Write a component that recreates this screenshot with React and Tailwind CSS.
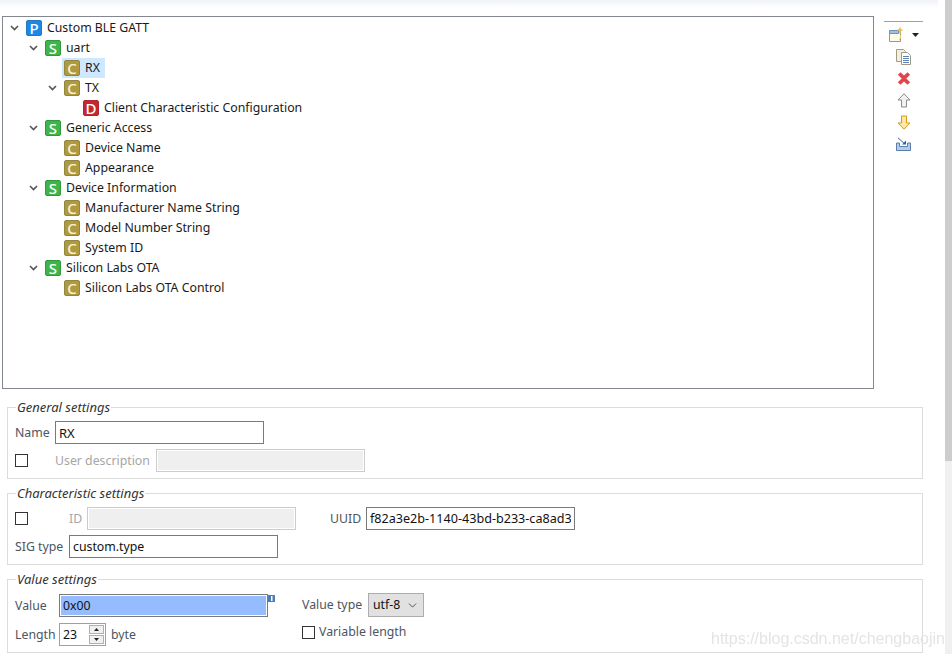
import { ChevronDown } from "lucide-react";

const font = "font-['Noto_Sans','Open_Sans',sans-serif]";

const nodes = [
  { depth: "pl-[5px]", kind: "P", label: "Custom BLE GATT", open: true },
  { depth: "pl-[24px]", kind: "S", label: "uart", open: true },
  { depth: "pl-[43px]", kind: "C", label: "RX", selected: true },
  { depth: "pl-[43px]", kind: "C", label: "TX", open: true },
  { depth: "pl-[62px]", kind: "D", label: "Client Characteristic Configuration" },
  { depth: "pl-[24px]", kind: "S", label: "Generic Access", open: true },
  { depth: "pl-[43px]", kind: "C", label: "Device Name" },
  { depth: "pl-[43px]", kind: "C", label: "Appearance" },
  { depth: "pl-[24px]", kind: "S", label: "Device Information", open: true },
  { depth: "pl-[43px]", kind: "C", label: "Manufacturer Name String" },
  { depth: "pl-[43px]", kind: "C", label: "Model Number String" },
  { depth: "pl-[43px]", kind: "C", label: "System ID" },
  { depth: "pl-[24px]", kind: "S", label: "Silicon Labs OTA", open: true },
  { depth: "pl-[43px]", kind: "C", label: "Silicon Labs OTA Control" },
];

const badgeColors = {
  P: "bg-[#1b87e6] border-[#2a76bd] text-white",
  S: "bg-[#3db54a] border-[#2f9a3c] text-white",
  C: "bg-[#b09a40] border-[#94853f] text-[#f7f3d6]",
  D: "bg-[#c9252d] border-[#ab2a30] text-white",
};

function Badge({ kind }) {
  return (
    <span className={`flex h-4 w-4 items-center justify-center rounded-[2px] border text-[15px] font-medium leading-none ${badgeColors[kind]}`}>
      {kind}
    </span>
  );
}

function TreeRow({ node }) {
  return (
    <div className={`flex h-5 items-center ${node.depth}`}>
      <span className="flex w-[16px] justify-center pr-[3px]">
        {node.open && (
          <svg width="9" height="6" viewBox="0 0 9 6" fill="none" stroke="#555" strokeWidth="1.6">
            <path d="M1 1l3.5 3.5L8 1" />
          </svg>
        )}
      </span>
      <div className={`flex h-5 items-center gap-[5px] pl-[2px] ${node.selected ? "bg-[#cde8ff] pr-[5px]" : "pr-[2px]"}`}>
        <Badge kind={node.kind} />
        <span className="text-[12.3px] leading-5 text-[#1a1a1a]">{node.label}</span>
      </div>
    </div>
  );
}

function Toolbar() {
  return (
    <div className="ml-[10px] flex w-[39px] flex-col">
      <div className="mt-[5px] h-px bg-[#a0a0a0]" />
      {/* new item */}
      <div className="mt-[5px] flex h-[15px] items-center pl-[5px]">
        <svg width="16" height="15" viewBox="0 0 16 15">
          <path d="M.5 3.500h11v11H.5z" fill="#fdfbe8" stroke="#9a9a7a" />
          <path d="M.5 3.500h9v3H.5z" fill="#9cc0e4" stroke="#6f94bc" />
          <path d="M11 .5v6M8.500 3h5" stroke="#e6c04d" strokeWidth="1.6" />
          <path d="M10 13c1.300-1 1.600-3 1.600-5" stroke="#f0d978" fill="none" />
        </svg>
        <svg className="ml-[7px]" width="7" height="4" viewBox="0 0 7 4">
          <path d="M0 0h7L3.500 4z" fill="#222" />
        </svg>
      </div>
      {/* copy */}
      <div className="mt-[7px] flex h-[16px] pl-[12px]">
        <svg width="16" height="16" viewBox="0 0 16 16">
          <path d="M.5.500h7l2 2v10h-9z" fill="#f3efdf" stroke="#a39c7c" />
          <path d="M5.500 3.500h6l3 3v9h-9z" fill="#fff" stroke="#9c9a84" />
          <path d="M7 7.500h6M7 9.500h6M7 11.500h6M7 13.500h6" stroke="#5b80ad" />
        </svg>
      </div>
      {/* delete */}
      <div className="mt-[6px] flex h-[15px] pl-[13px]">
        <svg width="14" height="15" viewBox="0 0 14 15">
          <path d="M2.200 2.500L7 7.200 11.800 2.500M2.200 12.500L7 7.800l4.800 4.700" stroke="#e2444e" strokeWidth="3.800" fill="none" />
        </svg>
      </div>
      {/* move up */}
      <div className="mt-[7px] flex h-[15px] pl-[13px]">
        <svg width="14" height="15" viewBox="0 0 14 15">
          <path d="M7 .8L13 7H9.500v7h-5V7H1z" fill="#f2f2f2" stroke="#8a8a8a" />
        </svg>
      </div>
      {/* move down */}
      <div className="mt-[7px] flex h-[15px] pl-[13px]">
        <svg width="14" height="15" viewBox="0 0 14 15">
          <path d="M7 14.200L13 8H9.500V1h-5v7H1z" fill="#fde9a3" stroke="#d49a1c" />
        </svg>
      </div>
      {/* import */}
      <div className="mt-[7px] flex h-[14px] pl-[11px]">
        <svg width="17" height="14" viewBox="0 0 17 14">
          <path d="M1.500 6v7.500h14V6h-3v3.500h-8V6z" fill="#b8cbe4" stroke="#5a7fae" />
          <path d="M3 .8l6 5.500" stroke="#3a5f95" />
          <path d="M7 7.500h4v-4z" fill="#1f63b0" />
        </svg>
      </div>
    </div>
  );
}

function Group({ title, children, className = "" }) {
  return (
    <fieldset className={`ml-[7px] w-[916px] border border-[#dcdcdc] pl-[7px] ${className}`}>
      <legend className="ml-px h-[15px] px-px text-[13px] italic leading-[15px] text-[#333]">{title}</legend>
      {children}
    </fieldset>
  );
}

function Field({ value, className = "" }) {
  return (
    <input
      readOnly
      value={value}
      className={`h-[23px] border border-[#7a7a7a] bg-white px-[3px] text-[#111] outline-none ${className}`}
    />
  );
}

function DisabledField({ className = "" }) {
  return <div className={`h-[23px] border border-[#cccccc] bg-[#efefef] shadow-[inset_0_0_0_1px_#fff] ${className}`} />;
}

function Check() {
  return <span className="block h-[13px] w-[13px] shrink-0 border border-[#333] bg-white" />;
}

function Label({ children, className = "" }) {
  return <span className={`text-[12.3px] leading-[18px] ${className}`}>{children}</span>;
}

export default function App() {
  return (
    <div className={`flex h-[654px] w-[952px] overflow-hidden bg-white ${font}`}>
      <div className="relative flex w-[945px] flex-col">
        <div className="h-2 w-[938px] bg-gradient-to-b from-[#eff2f8] to-white" />

        <div className="ml-[2px] mt-2 flex">
          <div className="h-[373px] w-[872px] border border-[#828790] py-px">
            {nodes.map((node) => (
              <TreeRow key={node.label} node={node} />
            ))}
          </div>
          <Toolbar />
        </div>

        <Group title="General settings" className="mt-[11px] h-[79px]">
          <div className="flex flex-col gap-[5px] pt-[6px]">
            <div className="flex items-center">
              <Label className="w-10 text-[#4c5560]">Name</Label>
              <Field value="RX" className="w-[209px] text-[13px]" />
            </div>
            <div className="flex items-center">
              <div className="w-10"><Check /></div>
              <Label className="w-[101px] text-[#a6a6a6]">User description</Label>
              <DisabledField className="w-[209px]" />
            </div>
          </div>
        </Group>

        <Group title="Characteristic settings" className="mt-[7px] h-[79px]">
          <div className="flex flex-col gap-[5px] pt-[6px]">
            <div className="flex items-center">
              <div className="w-[54px]"><Check /></div>
              <Label className="w-[18px] text-[#a6a6a6]">ID</Label>
              <DisabledField className="w-[209px]" />
              <Label className="ml-[34px] w-[36px] text-[#4c5560]">UUID</Label>
              <Field value="f82a3e2b-1140-43bd-b233-ca8ad3" className="w-[209px] text-[12.6px]" />
            </div>
            <div className="flex items-center">
              <Label className="w-[54px] text-[#4c5560]">SIG type</Label>
              <Field value="custom.type" className="w-[209px] text-[12.3px]" />
            </div>
          </div>
        </Group>

        <Group title="Value settings" className="mt-[7px] h-[81px]">
          <div className="flex pt-[6px]">
            <div className="mt-px flex w-[287px] flex-col gap-[6px]">
              <div className="flex items-center">
                <Label className="w-11 text-[#4c5560]">Value</Label>
                <div className="relative">
                  <input
                    readOnly
                    value="0x00"
                    className="block h-[23px] w-[209px] border border-[#7a7a7a] bg-[#94bcff] px-[3px] text-[12.3px] text-[#111] shadow-[inset_0_0_0_1px_#fff] outline-none"
                  />
                  <svg className="absolute left-[209px] top-px" width="7" height="7" viewBox="0 0 7 7">
                    <path d="M0 0h7v7H0z" fill="#4a7fb5" />
                    <path d="M3 1h1.500v5H3z" fill="#fff" />
                  </svg>
                </div>
              </div>
              <div className="flex items-center">
                <Label className="w-11 text-[#4c5560]">Length</Label>
                <div className="flex h-[23px] w-[47px] items-center border border-[#a0a0a0] bg-white pl-[3px] pr-px">
                  <span className="w-[27px] text-[12.3px] leading-[18px] text-[#111]">23</span>
                  <div className="flex flex-col gap-px">
                    <SpinButton up />
                    <SpinButton />
                  </div>
                </div>
                <Label className="ml-[5px] text-[#4c5560]">byte</Label>
              </div>
            </div>
            <div className="flex flex-col">
              <div className="flex items-center">
                <Label className="w-[66px] text-[#4c5560]">Value type</Label>
                <div className="flex h-6 w-14 items-center justify-between border border-[#adadad] bg-[#e1e1e1] pl-1 pr-1">
                  <span className="text-[12.3px] leading-[18px] text-[#111]">utf-8</span>
                  <ChevronDown size={13} strokeWidth={1.5} className="text-[#333]" />
                </div>
              </div>
              <div className="mt-[6px] flex items-center gap-1">
                <Check />
                <Label className="text-[#4c5560]">Variable length</Label>
              </div>
            </div>
          </div>
        </Group>

        {/* watermark */}
        <span className="absolute left-[711px] top-[627px] font-['Liberation_Sans',sans-serif] text-[16px] text-[#e4e4e4] blur-[0.4px]">
          https://blog.csdn.net/chengbaojin
        </span>
      </div>

      <div className="flex w-[7px] flex-col bg-[#f0f0f0]">
        <div className="h-[461px] bg-[#cdcdcd]" />
      </div>
    </div>
  );
}

function SpinButton({ up }) {
  return (
    <span className="flex h-[9px] w-[15px] items-center justify-center border border-[#b0b0b0] bg-[#f0f0f0]">
      <svg width="5" height="3" viewBox="0 0 5 3">
        <path d={up ? "M2.500 0L5 3H0z" : "M0 0h5L2.500 3z"} fill="#222" />
      </svg>
    </span>
  );
}
